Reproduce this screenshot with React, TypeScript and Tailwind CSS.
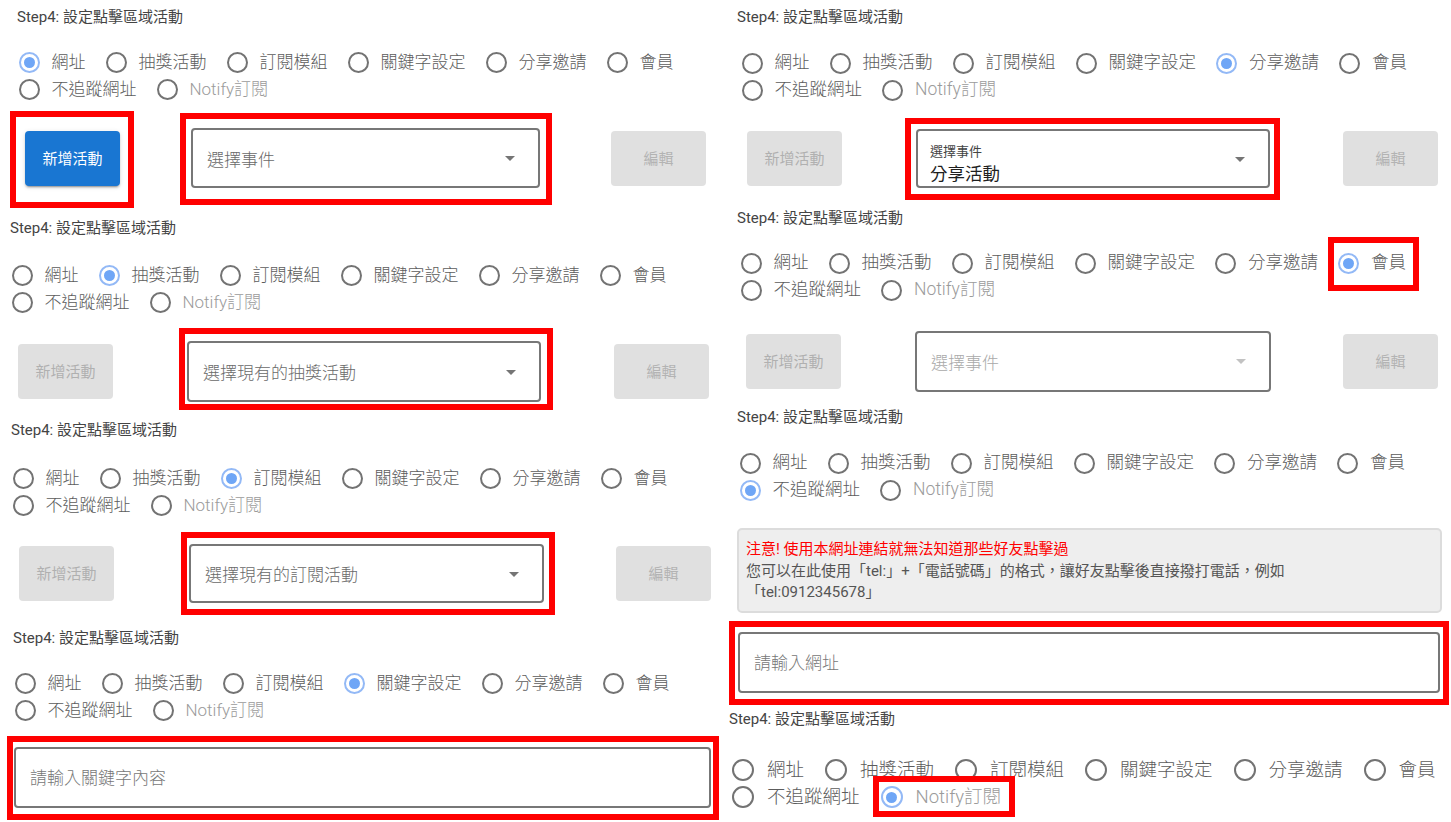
import type { ReactNode } from 'react';

const ROW1 = ['網址', '抽獎活動', '訂閱模組', '關鍵字設定', '分享邀請', '會員'];
const ROW2 = ['不追蹤網址', 'Notify訂閱'];

type Size = 'sm' | 'md' | 'lg';

const SIZES: Record<Size, { item: string; circle: string; label: string }> = {
  sm: { item: 'mr-[20px]', circle: 'w-[21px] h-[21px]', label: 'ml-[12px] text-[17px]' },
  md: { item: 'mr-[20px]', circle: 'w-[21px] h-[21px]', label: 'ml-[12px] text-[17.5px]' },
  lg: { item: 'mr-[21px]', circle: 'w-[22px] h-[22px]', label: 'ml-[13px] text-[18.5px]' },
};

// red annotation frame drawn over the element it wraps
function Mark({ cls }: { cls: string }) {
  return <div className={`pointer-events-none absolute z-10 border-[6px] border-[#ff0000] ${cls}`} />;
}

function Radio({ label, checked, size, children }: { label: string; checked: boolean; size: Size; children?: ReactNode }) {
  const s = SIZES[size];
  return (
    <div className={`relative flex items-center ${s.item}`}>
      <span
        className={`flex shrink-0 items-center justify-center rounded-full border-2 ${s.circle} ${
          checked ? 'border-[#93b9f6]' : 'border-[#737373]'
        }`}
      >
        {checked && <span className="h-[11px] w-[11px] rounded-full bg-[#6fa6f6]" />}
      </span>
      <span
        className={`${s.label} font-light leading-none whitespace-nowrap ${
          label.startsWith('Notify') ? 'text-[#9b9b9b]' : 'text-[#5c5c5c]'
        }`}
      >
        {label}
      </span>
      {children}
    </div>
  );
}

function RadioGroup({
  selected,
  size,
  cls,
  mark,
}: {
  selected: string;
  size: Size;
  cls: string;
  mark?: { label: string; cls: string };
}) {
  return (
    <div className={cls}>
      {[ROW1, ROW2].map((row, i) => (
        <div key={i} className="flex h-[27px] items-center">
          {row.map((l) => (
            <Radio key={l} label={l} checked={l === selected} size={size}>
              {mark && mark.label === l && <Mark cls={mark.cls} />}
            </Radio>
          ))}
        </div>
      ))}
    </div>
  );
}

function Title({ cls }: { cls: string }) {
  return <div className={`h-[20px] text-[15px] leading-[20px] text-[#444] ${cls}`}>Step4: 設定點擊區域活動</div>;
}

function AddButton({ active, cls, children }: { active?: boolean; cls: string; children?: ReactNode }) {
  return (
    <div
      className={`relative flex h-[55px] w-[95px] shrink-0 items-center justify-center rounded-[4px] pt-[2px] text-[15px] ${
        active
          ? 'bg-[#1976d2] text-white shadow-[0_3px_1px_-2px_rgba(0,0,0,0.2),0_2px_2px_0_rgba(0,0,0,0.14),0_1px_5px_0_rgba(0,0,0,0.12)]'
          : 'bg-[#e0e0e0] text-[#b0b0b0]'
      } ${cls}`}
    >
      新增活動
      {children}
    </div>
  );
}

function EditButton({ cls }: { cls: string }) {
  return (
    <div
      className={`flex h-[55px] w-[95px] shrink-0 items-center justify-center rounded-[4px] bg-[#e0e0e0] pt-[2px] text-[15px] text-[#b3b3b3] ${cls}`}
    >
      編輯
    </div>
  );
}

function Arrow({ dim }: { dim?: boolean }) {
  return (
    <svg viewBox="0 0 24 24" className="mr-[16px] h-[24px] w-[24px] shrink-0">
      <path d="M7 10l5 5 5-5z" fill={dim ? '#c2c2c2' : '#757575'} />
    </svg>
  );
}

function Select({
  text,
  label,
  dim,
  cls,
  children,
}: {
  text: string;
  label?: string;
  dim?: boolean;
  cls: string;
  children?: ReactNode;
}) {
  return (
    <div className={`relative flex shrink-0 items-center rounded-[4px] border-2 border-[#777] bg-white ${cls}`}>
      {label ? (
        <div className="flex-1 pl-[12px] pt-[12px]">
          <div className="text-[13px] leading-[16px] text-[#444]">{label}</div>
          <div className="mt-[3px] text-[17.5px] leading-[22px] text-[#1f1f1f]">{text}</div>
        </div>
      ) : (
        <div className={`flex-1 pl-[14px] pt-[5px] text-[17px] font-light ${dim ? 'text-[#a9a9a9]' : 'text-[#6a6a6a]'}`}>{text}</div>
      )}
      <Arrow dim={dim} />
      {children}
    </div>
  );
}

function TextInput({ placeholder, cls, children }: { placeholder: string; cls: string; children?: ReactNode }) {
  return (
    <div
      className={`relative flex h-[61px] items-center rounded-[4px] border-2 border-[#777] bg-white pl-[14px] pt-[3px] text-[17px] font-light text-[#777] ${cls}`}
    >
      {placeholder}
      {children}
    </div>
  );
}

export default function App() {
  return (
    <div className="flex h-[822px] w-[1451px] overflow-hidden bg-white font-['Roboto','Noto_Sans_CJK_TC',sans-serif]">
      {/* left column */}
      <div className="flex w-[720px] shrink-0 flex-col">
        <section className="h-[211px] shrink-0 pt-[7px]">
          <Title cls="ml-[17px]" />
          <RadioGroup selected="網址" size="sm" cls="ml-[18.5px] mt-[22px]" />
          <div className="mt-[25px] flex h-[60px] items-center">
            <AddButton active cls="ml-[25px]">
              <Mark cls="-left-[15px] -right-[14px] -top-[19.5px] -bottom-[22px]" />
            </AddButton>
            <Select text="選擇事件" cls="ml-[71px] h-[60px] w-[349px]">
              <Mark cls="-left-[13px] -right-[14px] -top-[17px] -bottom-[19px]" />
            </Select>
            <EditButton cls="ml-[71px]" />
          </div>
        </section>

        <section className="h-[202px] shrink-0 pt-[7px]">
          <Title cls="ml-[10px]" />
          <RadioGroup selected="抽獎活動" size="sm" cls="ml-[11.5px] mt-[23.5px]" />
          <div className="mt-[25.5px] flex h-[61px] items-center">
            <AddButton cls="ml-[18px]" />
            <Select text="選擇現有的抽獎活動" cls="ml-[74px] h-[61px] w-[354px]">
              <Mark cls="-left-[10px] -right-[14px] -top-[15px] -bottom-[10px]" />
            </Select>
            <EditButton cls="ml-[73px]" />
          </div>
        </section>

        <section className="h-[208px] shrink-0 pt-[7px]">
          <Title cls="ml-[11px]" />
          <RadioGroup selected="訂閱模組" size="sm" cls="ml-[12.5px] mt-[24.5px]" />
          <div className="mt-[25.5px] flex h-[59px] items-center">
            <AddButton cls="ml-[19px]" />
            <Select text="選擇現有的訂閱活動" cls="ml-[75px] h-[59px] w-[355px]">
              <Mark cls="-left-[10px] -right-[13px] -top-[14px] -bottom-[14px]" />
            </Select>
            <EditButton cls="ml-[72px]" />
          </div>
        </section>

        <section className="flex-1 pt-[7px]">
          <Title cls="ml-[13px]" />
          <RadioGroup selected="關鍵字設定" size="sm" cls="ml-[14.5px] mt-[22px]" />
          <TextInput placeholder="請輸入關鍵字內容" cls="ml-[14px] mt-[23px] w-[697px]">
            <Mark cls="-left-[9px] -right-[10px] -top-[13px] -bottom-[14px]" />
          </TextInput>
        </section>
      </div>

      {/* right column */}
      <div className="flex w-[731px] shrink-0 flex-col">
        <section className="h-[201px] shrink-0 pt-[7px]">
          <Title cls="ml-[17px]" />
          <RadioGroup selected="分享邀請" size="md" cls="ml-[21.5px] mt-[22.5px]" />
          <div className="mt-[25.5px] flex h-[59px] items-center">
            <AddButton cls="ml-[27px]" />
            <Select text="分享活動" label="選擇事件" cls="ml-[74px] h-[59px] w-[354px]">
              <Mark cls="-left-[13px] -right-[12px] -top-[13px] -bottom-[14px]" />
            </Select>
            <EditButton cls="ml-[73px]" />
          </div>
        </section>

        <section className="h-[199px] shrink-0 pt-[7px]">
          <Title cls="ml-[17px]" />
          <RadioGroup
            selected="會員"
            size="md"
            cls="ml-[20.5px] mt-[21.5px]"
            mark={{ label: '會員', cls: '-left-[10px] -right-[13px] -top-[16px] -bottom-[17px]' }}
          />
          <div className="mt-[27px] flex h-[61px] items-center">
            <AddButton cls="ml-[26px]" />
            <Select text="選擇事件" dim cls="ml-[74px] h-[61px] w-[356px]" />
            <EditButton cls="ml-[72px]" />
          </div>
        </section>

        <section className="h-[302px] shrink-0 pt-[7px]">
          <Title cls="ml-[17px]" />
          <RadioGroup selected="不追蹤網址" size="md" cls="ml-[19.5px] mt-[22.5px]" />
          <div className="ml-[17px] mt-[24.5px] h-[85px] w-[705px] rounded-[5px] border-2 border-[#dcdcdc] bg-[#eeeeee] px-[7px] pt-[9px] text-[15px] leading-[21.5px] text-[#555]">
            <div className="text-[#ff0000]">注意! 使用本網址連結就無法知道那些好友點擊過</div>
            <div>您可以在此使用「tel:」+「電話號碼」的格式，讓好友點擊後直接撥打電話，例如</div>
            <div>「tel:0912345678」</div>
          </div>
          <TextInput placeholder="請輸入網址" cls="ml-[18px] mt-[19px] w-[702px]">
            <Mark cls="-left-[11px] -right-[11px] -top-[13px] -bottom-[14px]" />
          </TextInput>
        </section>

        <section className="flex-1 pt-[7px]">
          <Title cls="ml-[9px]" />
          <RadioGroup
            selected="Notify訂閱"
            size="lg"
            cls="ml-[12px] mt-[27.5px]"
            mark={{ label: 'Notify訂閱', cls: '-left-[7.5px] -right-[13.5px] -top-[10.5px] -bottom-[8.5px]' }}
          />
        </section>
      </div>
    </div>
  );
}
